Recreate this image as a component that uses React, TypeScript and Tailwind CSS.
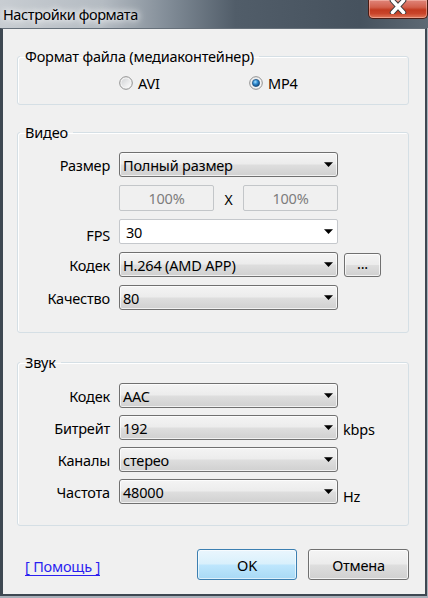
import React from 'react';

function Arrow() {
  return (
    <svg width="9" height="5" viewBox="0 0 9 5" className="shrink-0">
      <path d="M0 0.3H9L4.5 5Z" fill="#000" />
    </svg>
  );
}

function Radio({ checked = false }: { checked?: boolean }) {
  return (
    <svg width="14" height="14" viewBox="0 0 14 14" className="shrink-0">
      <defs>
        <linearGradient id="rb-fill" x1="0" y1="0" x2="1" y2="1">
          <stop offset="0" stopColor="#d2d4d6" />
          <stop offset="1" stopColor="#fcfcfc" />
        </linearGradient>
        <radialGradient id="rb-dot" cx="0.4" cy="0.35" r="0.7">
          <stop offset="0" stopColor="#a6e0ff" />
          <stop offset="0.45" stopColor="#2f8bd0" />
          <stop offset="1" stopColor="#0c3f73" />
        </radialGradient>
      </defs>
      <circle cx="7" cy="7" r="6.3" fill="#f4f4f4" stroke="#8e8f8f" strokeWidth="1" />
      <circle cx="7" cy="7" r="4.6" fill="url(#rb-fill)" />
      {checked && <circle cx="7" cy="7" r="3.6" fill="url(#rb-dot)" stroke="#1b4f80" strokeWidth="0.7" />}
    </svg>
  );
}

function Combo({ value, editable = false }: { value: string; editable?: boolean }) {
  return (
    <div
      className={
        editable
          ? 'flex h-[25px] w-[219px] items-center justify-between rounded-[2px] border border-[#c5c8cc] bg-white pl-[6px] pr-[4px]'
          : 'flex h-[25px] w-[219px] items-center justify-between rounded-[3px] border border-[#707070] bg-[linear-gradient(#f4f4f4,#ececec_48%,#dedede_52%,#d0d0d0)] pl-[3px] pr-[4px] shadow-[inset_0_0_0_1px_rgba(255,255,255,0.7)]'
      }
    >
      <span className="whitespace-nowrap">{value}</span>
      <Arrow />
    </div>
  );
}

function Row({
  label,
  labelClass = '',
  children,
}: {
  label: string;
  labelClass?: string;
  children: React.ReactNode;
}) {
  return (
    <div className="flex h-[25px] items-center">
      <div className={`w-[92px] whitespace-nowrap text-right ${labelClass}`}>{label}</div>
      <div className="ml-[9px] flex items-center">{children}</div>
    </div>
  );
}

function Group({
  title,
  className = '',
  children,
}: {
  title: string;
  className?: string;
  children: React.ReactNode;
}) {
  return (
    <fieldset
      className={`ml-[14px] w-[392px] rounded-[3px] border border-[#d5dfe5] shadow-[inset_1px_1px_0_#fff] ${className}`}
    >
      <legend className="ml-[2px] px-[5px] leading-[20px]">{title}</legend>
      {children}
    </fieldset>
  );
}

export default function App() {
  return (
    <div className="flex h-[598px] w-[428px] flex-col bg-[#a7b0b9] font-['Noto_Sans','Open_Sans',sans-serif] text-[14.5px] leading-[20px] tracking-[-0.2px] text-black">
      {/* title bar */}
      <div className="flex h-[28px] shrink-0 items-start justify-between bg-[linear-gradient(90deg,#c8cdd2_0%,#b4bbc2_24%,#7f8a95_40%,#515d69_55%,#46525e_84%,#5d6974_100%)]">
        <div className="mt-[4px] pl-[3px] tracking-[-0.4px] [text-shadow:0_0_6px_#fff,0_0_10px_#fff]">Настройки формата</div>
        <div className="flex h-[19px] w-[60px] justify-center rounded-b-[5px] border border-t-0 border-[#4a1c14] bg-[linear-gradient(#e0857a,#d2604c_40%,#c23a20_55%,#c9442a_75%,#e0785a)] shadow-[inset_0_0_0_1px_rgba(255,210,200,0.45)]">
          <svg width="18" height="14" viewBox="0 0 18 14">
            <path d="M3.5 0.5L14.5 12.5M14.5 0.5L3.5 12.5" stroke="#3b3b3b" strokeWidth="5.5" strokeLinecap="round" />
            <path d="M3.5 0.5L14.5 12.5M14.5 0.5L3.5 12.5" stroke="#fff" strokeWidth="3.5" strokeLinecap="round" />
          </svg>
        </div>
      </div>

      {/* frame + client area */}
      <div className="flex flex-1 pb-[2px] pr-px">
        <div className="flex flex-1 flex-col border-b-2 border-l-[3px] border-r-2 border-t border-[#3e4852] border-t-[#66707a] bg-[#f0f0f0]">
          <Group title="Формат файла (медиаконтейнер)" className="mt-[17px] pb-[11px]">
            <div className="mt-[7px] flex h-[20px] items-center pl-[101px]">
              <div className="flex w-[130px] items-center gap-[5px]">
                <Radio />
                <span>AVI</span>
              </div>
              <div className="flex items-center gap-[5px]">
                <Radio checked />
                <span>MP4</span>
              </div>
            </div>
          </Group>

          <Group title="Видео" className="mt-[17px] pb-[22px]">
            <div className="mt-[10px] flex flex-col gap-[8px]">
              <Row label="Размер">
                <Combo value="Полный размер" />
              </Row>
              <div className="flex h-[26px] items-center pl-[101px]">
                <div className="flex w-[219px] items-center justify-between">
                  <div className="flex h-[26px] w-[95px] items-center justify-center rounded-[2px] border border-[#c3c6c9] bg-[#f0f0f0] text-[#7d7d7d]">
                    100%
                  </div>
                  <span className="pt-[4px] text-[14px]">X</span>
                  <div className="flex h-[26px] w-[95px] items-center justify-center rounded-[2px] border border-[#c3c6c9] bg-[#f0f0f0] text-[#7d7d7d]">
                    100%
                  </div>
                </div>
              </div>
              <Row label="FPS" labelClass="pt-[6px]">
                <Combo value="30" editable />
              </Row>
              <Row label="Кодек">
                <Combo value="H.264 (AMD APP)" />
                <button className="ml-[6px] flex h-[24px] w-[37px] items-center justify-center rounded-[3px] border border-[#707070] bg-[linear-gradient(#f4f4f4,#ececec_48%,#dedede_52%,#d0d0d0)] pb-[4px] shadow-[inset_0_0_0_1px_rgba(255,255,255,0.7)]">
                  ...
                </button>
              </Row>
              <Row label="Качество">
                <Combo value="80" />
              </Row>
            </div>
          </Group>

          <Group title="Звук" className="mt-[19px] pb-[21px]">
            <div className="mt-[11px] flex flex-col gap-[7px]">
              <Row label="Кодек">
                <Combo value="AAC" />
              </Row>
              <Row label="Битрейт">
                <Combo value="192" />
                <span className="ml-[5px] pt-[2px]">kbps</span>
              </Row>
              <Row label="Каналы">
                <Combo value="стерео" />
              </Row>
              <Row label="Частота">
                <Combo value="48000" />
                <span className="ml-[5px] pt-[9px]">Hz</span>
              </Row>
            </div>
          </Group>

          <div className="mt-[23px] flex items-center pl-[22px] pr-[16px]">
            <a href="#" className="mt-[3px] text-[#2a1ff0] underline underline-offset-[3px]">
              [ Помощь ]
            </a>
            <div className="ml-auto flex gap-[11px]">
              <button className="h-[31px] w-[100px] rounded-[3px] border border-[#3c7fb1] bg-[linear-gradient(#eaf6fd,#d9f0fc_48%,#bee6fd_52%,#a7d9f5)] shadow-[inset_0_0_0_1px_rgba(255,255,255,0.6)]">
                OK
              </button>
              <button className="h-[31px] w-[101px] rounded-[3px] border border-[#707070] bg-[linear-gradient(#f4f4f4,#ececec_48%,#dedede_52%,#d0d0d0)] shadow-[inset_0_0_0_1px_rgba(255,255,255,0.7)]">
                Отмена
              </button>
            </div>
          </div>
        </div>
      </div>
    </div>
  );
}
